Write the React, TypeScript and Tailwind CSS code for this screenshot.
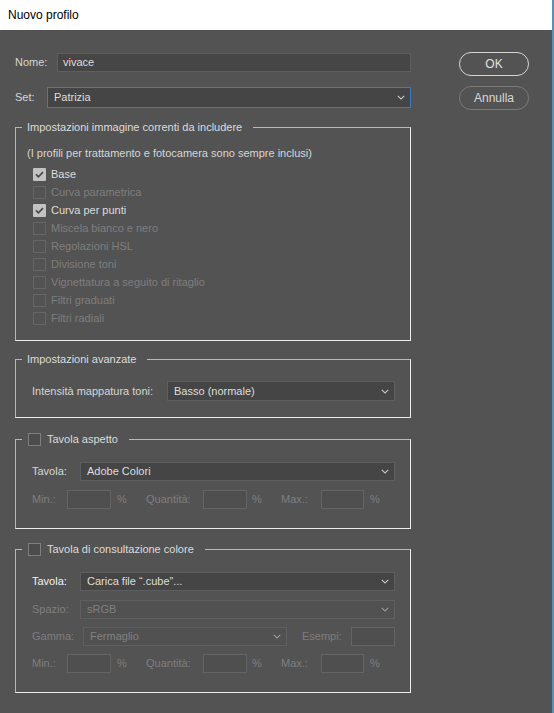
import type { ReactNode } from "react";

const font = "font-['Liberation_Sans',Arial,sans-serif]";

function Chevron({ dim }: { dim?: boolean }) {
  return (
    <svg width="8" height="5" viewBox="0 0 8 5" className="shrink-0" aria-hidden="true">
      <path d="M0.8 0.8 4 4 7.2 0.8" fill="none" stroke={dim ? "#9a9a9a" : "#c6c6c6"} strokeWidth="1.1" />
    </svg>
  );
}

function Select({
  value,
  className = "",
  disabled,
  focused,
}: {
  value: string;
  className?: string;
  disabled?: boolean;
  focused?: boolean;
}) {
  const tone = disabled
    ? "border-[#5f5f5f] bg-[#515151] text-[#808080]"
    : focused
      ? "border-[#3d78c2] bg-[#454545] text-[#dedede]"
      : "border-[#5e5e5e] bg-[#454545] text-[#dedede]";
  return (
    <div className={`flex items-center justify-between border pl-[6px] pr-[5px] ${tone} ${className}`}>
      <span>{value}</span>
      <Chevron dim={disabled} />
    </div>
  );
}

function Field({ className = "", disabled }: { className?: string; disabled?: boolean }) {
  return (
    <div
      className={`border ${disabled ? "border-[#646464] bg-[#4f4f4f]" : "border-[#5e5e5e] bg-[#464646]"} ${className}`}
    />
  );
}

function Check({ checked, disabled }: { checked?: boolean; disabled?: boolean }) {
  if (checked) {
    return (
      <span className="flex h-[13px] w-[13px] shrink-0 items-center justify-center rounded-[1px] bg-[#c2c2c2]">
        <svg width="9" height="7" viewBox="0 0 9 7" aria-hidden="true">
          <path d="M1 3.4 3.4 5.8 8 1.2" fill="none" stroke="#4a4a4a" strokeWidth="1.7" />
        </svg>
      </span>
    );
  }
  return (
    <span
      className={`h-[13px] w-[13px] shrink-0 border ${disabled ? "border-[#666666]" : "border-[#7e7e7e] bg-[#4c4c4c]"}`}
    />
  );
}

function Group({ legend, className = "", children }: { legend: ReactNode; className?: string; children: ReactNode }) {
  return (
    <fieldset
      className={`border border-t-[#b8b8b8] border-l-[#b8b8b8] border-r-[#ececec] border-b-[#ececec] ${className}`}
    >
      <legend className="ml-[6px] flex h-[16px] items-center pr-[11px] leading-[16px] text-[#dcdcdc]">{legend}</legend>
      {children}
    </fieldset>
  );
}

function PercentRow({ className = "" }: { className?: string }) {
  return (
    <div className={`flex h-[19px] items-center text-[#7e7e7e] ${className}`}>
      <span className="w-[35px]">Min.:</span>
      <Field disabled className="h-[19px] w-[44px]" />
      <span className="w-[35px] pl-[6px]">%</span>
      <span className="w-[57px]">Quantità:</span>
      <Field disabled className="h-[19px] w-[44px]" />
      <span className="w-[34px] pl-[5px]">%</span>
      <span className="w-[40px]">Max.:</span>
      <Field disabled className="h-[19px] w-[43px]" />
      <span className="pl-[6px]">%</span>
    </div>
  );
}

const options = [
  { label: "Base", checked: true },
  { label: "Curva parametrica", disabled: true },
  { label: "Curva per punti", checked: true },
  { label: "Miscela bianco e nero", disabled: true },
  { label: "Regolazioni HSL", disabled: true },
  { label: "Divisione toni", disabled: true },
  { label: "Vignettatura a seguito di ritaglio", disabled: true },
  { label: "Filtri graduati", disabled: true },
  { label: "Filtri radiali", disabled: true },
];

export default function App() {
  return (
    <div className={`flex h-[713px] w-[554px] flex-col border-r-2 border-[#5d8fb4] bg-[#535353] text-[11px] ${font}`}>
      <div className="flex h-[30px] shrink-0 items-center bg-white pl-[8px] text-[12px] text-black">Nuovo profilo</div>

      <div className="flex">
        <div className="ml-[15px] w-[396px] pt-[23px]">
          <div className="flex h-[19px] items-center">
            <span className="w-[42px] text-[#d6d6d6]">Nome:</span>
            <div className="flex h-[19px] flex-1 items-center border border-[#5e5e5e] bg-[#464646] pl-[5px] text-[#dedede]">
              vivace
            </div>
          </div>

          <div className="mt-[15px] flex h-[21px] items-center">
            <span className="w-[32px] text-[#d6d6d6]">Set:</span>
            <Select value="Patrizia" focused className="h-[21px] flex-1" />
          </div>

          <Group legend={<span className="pl-[5px]">Impostazioni immagine correnti da includere</span>} className="mt-[11px]">
            <div className="pb-[13px] pl-[11px] pt-[10px]">
              <div className="h-[16px] leading-[16px] text-[#d6d6d6]">
                (I profili per trattamento e fotocamera sono sempre inclusi)
              </div>
              <div className="mt-[4px] pl-[6px]">
                {options.map((o) => (
                  <div key={o.label} className="flex h-[18px] items-center gap-[5px]">
                    <Check checked={o.checked} disabled={o.disabled} />
                    <span className={o.disabled ? "text-[#7e7e7e]" : "text-[#dcdcdc]"}>{o.label}</span>
                  </div>
                ))}
              </div>
            </div>
          </Group>

          <Group legend={<span className="pl-[5px]">Impostazioni avanzate</span>} className="mt-[10px]">
            <div className="flex items-center pb-[16px] pl-[16px] pr-[15px] pt-[14px]">
              <span className="w-[135px] text-[#d6d6d6]">Intensità mappatura toni:</span>
              <Select value="Basso (normale)" className="h-[20px] flex-1" />
            </div>
          </Group>

          <Group
            legend={
              <span className="flex items-center gap-[6px] pl-[6px]">
                <Check />
                Tavola aspetto
              </span>
            }
            className="mt-[13px]"
          >
            <div className="pb-[19px] pl-[16px] pr-[15px] pt-[15px]">
              <div className="flex h-[19px] items-center">
                <span className="w-[48px] text-[#d6d6d6]">Tavola:</span>
                <Select value="Adobe Colori" className="h-[19px] flex-1" />
              </div>
              <PercentRow className="mt-[9px]" />
            </div>
          </Group>

          <Group
            legend={
              <span className="flex items-center gap-[6px] pl-[6px]">
                <Check />
                Tavola di consultazione colore
              </span>
            }
            className="mt-[12px]"
          >
            <div className="pb-[19px] pl-[16px] pr-[15px] pt-[15px]">
              <div className="flex h-[19px] items-center">
                <span className="w-[48px] text-[#f2f2f2]">Tavola:</span>
                <Select value="Carica file “.cube”..." className="h-[19px] flex-1" />
              </div>
              <div className="mt-[9px] flex h-[19px] items-center">
                <span className="w-[48px] text-[#7e7e7e]">Spazio:</span>
                <Select value="sRGB" disabled className="h-[19px] flex-1" />
              </div>
              <div className="mt-[8px] flex h-[19px] items-center">
                <span className="w-[51px] text-[#7e7e7e]">Gamma:</span>
                <Select value="Fermaglio" disabled className="h-[19px] w-[204px]" />
                <span className="w-[64px] pl-[15px] text-[#7e7e7e]">Esempi:</span>
                <Field disabled className="h-[19px] flex-1" />
              </div>
              <PercentRow className="mt-[8px]" />
            </div>
          </Group>
        </div>

        <div className="ml-[48px] flex w-[70px] flex-col gap-[10px] pt-[22px]">
          <button className="h-[24px] rounded-full border border-[#d6d6d6] text-[12px] text-[#e2e2e2]">OK</button>
          <button className="h-[24px] rounded-full border border-[#7a7a7a] text-[12px] text-[#d8d8d8]">Annulla</button>
        </div>
      </div>
    </div>
  );
}
